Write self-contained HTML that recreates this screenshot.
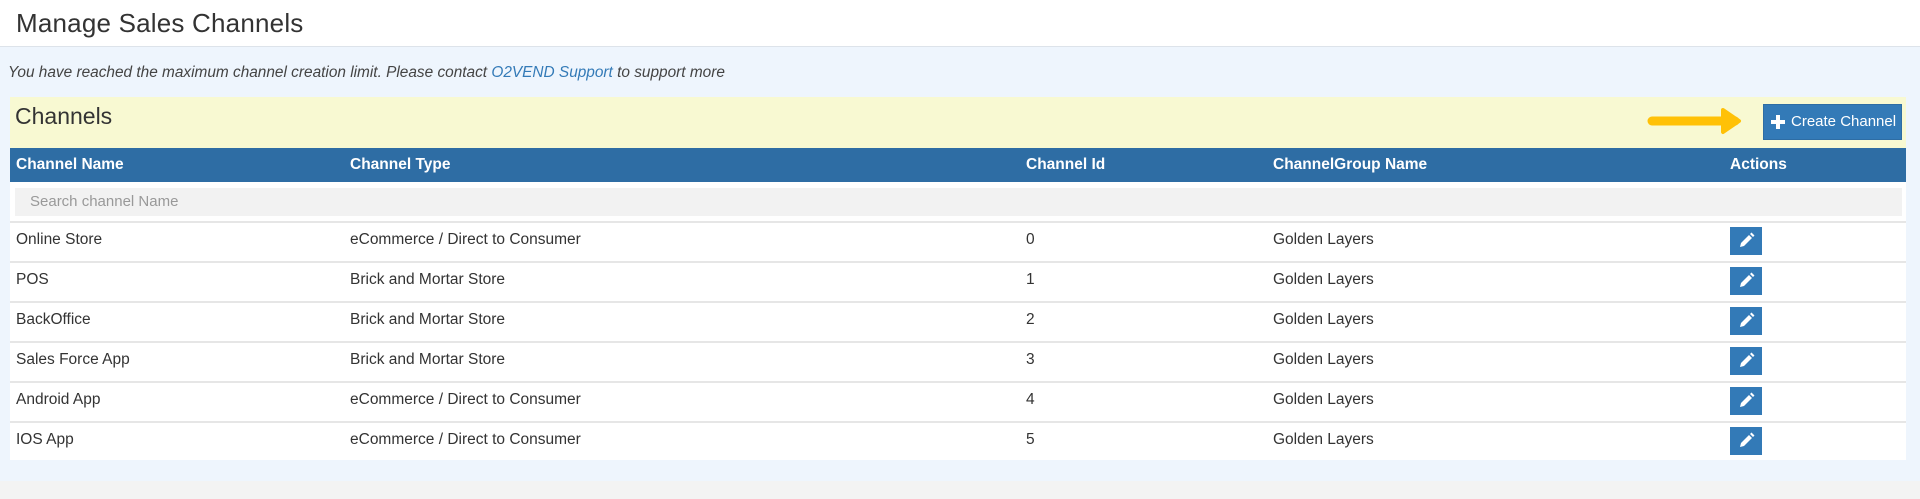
<!DOCTYPE html>
<html><head><style>
*{box-sizing:border-box;margin:0;padding:0}
body{width:1920px;height:499px;background:#f3f3f3;font-family:"Liberation Sans",sans-serif;color:#333;position:relative;overflow:hidden}
.hdr{position:absolute;left:0;top:0;width:1920px;height:47px;background:#fff;border-bottom:1px solid #dde3ea}
.hdr h1{position:absolute;left:16px;top:8px;font-size:26px;font-weight:normal;color:#333;letter-spacing:0.2px}
.main{position:absolute;left:0;top:47px;width:1920px;height:434px;background:#eef5fd}
.note{position:absolute;left:8px;top:17px;font-size:15.4px;font-style:italic;color:#444}
.note span{color:#337ab7}
.panel{position:absolute;left:10px;top:50px;width:1896px;height:51px;background:#f8f9d2}
.panel h2{position:absolute;left:5px;top:6px;font-size:23px;font-weight:normal;color:#333}
.btn{position:absolute;left:1753px;top:7px;width:139px;height:36px;background:#337ab7;border:1px solid #2e6da4;color:#fff;font-size:15px;line-height:34px;padding-left:27px;white-space:nowrap}
.btn:before{content:"";position:absolute;left:7px;top:15px;width:14px;height:4px;background:#fff}
.btn:after{content:"";position:absolute;left:12px;top:10px;width:4px;height:14px;background:#fff}
.tbl{position:absolute;left:10px;top:101px;width:1896px;height:312px;background:#fff}
.th{height:34px;background:#2e6da4;color:#fff;font-weight:bold;font-size:15.5px;position:relative}
.th div,.row div{position:absolute;top:0}
.th div{line-height:34px}
.search{position:absolute;left:5px;top:40px;width:1887px;height:28px;background:#f2f2f2;font-size:15px;color:#999;line-height:28px;padding-left:15px}
.row{position:absolute;left:0;width:1896px;height:40px;border-top:2px solid #e6e6e6;font-size:15.5px;color:#333}
.row div{line-height:34px}
.ed{position:absolute;left:1720px!important;top:4px!important;width:32px;height:28px;background:#337ab7}
</style></head><body>
<div class="hdr"><h1>Manage Sales Channels</h1></div>
<div class="main">
<div class="note">You have reached the maximum channel creation limit. Please contact <span>O2VEND Support</span> to support more</div>
<div class="panel"><h2>Channels</h2>
<svg style="position:absolute;left:1637px;top:10px" width="100" height="28"><path d="M5 14H88" stroke="#ffc107" stroke-width="9" stroke-linecap="round"/><path d="M76 3L92 14L76 25Z" fill="#ffc107" stroke="#ffc107" stroke-width="4" stroke-linejoin="round"/></svg>
<div class="btn">Create Channel</div></div>
<div class="tbl">
<div class="th"><div style="left:6px">Channel Name</div><div style="left:340px">Channel Type</div><div style="left:1016px">Channel Id</div><div style="left:1263px">ChannelGroup Name</div><div style="left:1720px">Actions</div></div>
<div class="search">Search channel Name</div>
<div class="row" style="top:73px"><div style="left:6px">Online Store</div><div style="left:340px">eCommerce / Direct to Consumer</div><div style="left:1016px">0</div><div style="left:1263px">Golden Layers</div><div class="ed"><svg width="32" height="28"><path d="M10 20L11 16L19 8L22 11L14 19Z M20 7L21.5 5.5L24.5 8.5L23 10Z" fill="#fff"/></svg></div></div>
<div class="row" style="top:113px"><div style="left:6px">POS</div><div style="left:340px">Brick and Mortar Store</div><div style="left:1016px">1</div><div style="left:1263px">Golden Layers</div><div class="ed"><svg width="32" height="28"><path d="M10 20L11 16L19 8L22 11L14 19Z M20 7L21.5 5.5L24.5 8.5L23 10Z" fill="#fff"/></svg></div></div>
<div class="row" style="top:153px"><div style="left:6px">BackOffice</div><div style="left:340px">Brick and Mortar Store</div><div style="left:1016px">2</div><div style="left:1263px">Golden Layers</div><div class="ed"><svg width="32" height="28"><path d="M10 20L11 16L19 8L22 11L14 19Z M20 7L21.5 5.5L24.5 8.5L23 10Z" fill="#fff"/></svg></div></div>
<div class="row" style="top:193px"><div style="left:6px">Sales Force App</div><div style="left:340px">Brick and Mortar Store</div><div style="left:1016px">3</div><div style="left:1263px">Golden Layers</div><div class="ed"><svg width="32" height="28"><path d="M10 20L11 16L19 8L22 11L14 19Z M20 7L21.5 5.5L24.5 8.5L23 10Z" fill="#fff"/></svg></div></div>
<div class="row" style="top:233px"><div style="left:6px">Android App</div><div style="left:340px">eCommerce / Direct to Consumer</div><div style="left:1016px">4</div><div style="left:1263px">Golden Layers</div><div class="ed"><svg width="32" height="28"><path d="M10 20L11 16L19 8L22 11L14 19Z M20 7L21.5 5.5L24.5 8.5L23 10Z" fill="#fff"/></svg></div></div>
<div class="row" style="top:273px"><div style="left:6px">IOS App</div><div style="left:340px">eCommerce / Direct to Consumer</div><div style="left:1016px">5</div><div style="left:1263px">Golden Layers</div><div class="ed"><svg width="32" height="28"><path d="M10 20L11 16L19 8L22 11L14 19Z M20 7L21.5 5.5L24.5 8.5L23 10Z" fill="#fff"/></svg></div></div>
</div>
</div>
</body></html>
